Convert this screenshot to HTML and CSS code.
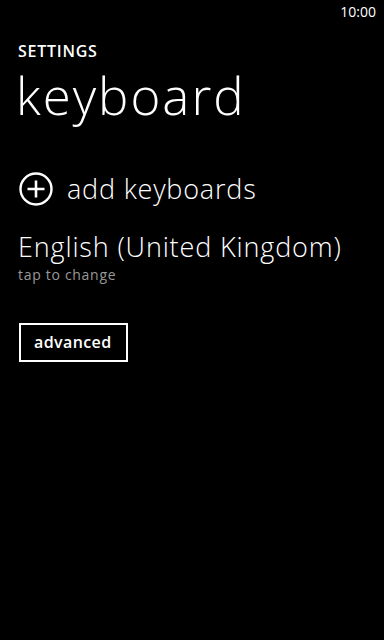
FILE: index.html
```html
<!DOCTYPE html>
<html>
<head>
<meta charset="utf-8">
<link rel="stylesheet" href="styles.css">
</head>
<body>
<div class="status"><span class="time">10:00</span></div>
<div class="page">
  <div class="app-title">SETTINGS</div>
  <div class="page-title">keyboard</div>
  <div class="add-row">
    <svg class="add-icon" width="34" height="34" viewBox="0 0 34 34">
      <circle cx="17" cy="17" r="15.5" fill="none" stroke="#fff" stroke-width="2.4"/>
      <path d="M17 8.5V25.5M8.5 17H25.5" stroke="#fff" stroke-width="2.6"/>
    </svg>
    <span class="add-text">add keyboards</span>
  </div>
  <div class="lang">English (United Kingdom)</div>
  <div class="hint">tap to change</div>
  <div class="btn">advanced</div>
</div>
</body>
</html>
```
FILE: styles.css
```css
html, body {
  margin: 0;
  padding: 0;
  background: #000;
  color: #fff;
  font-family: "Open Sans", "Noto Sans", sans-serif;
}
body {
  width: 384px;
  height: 640px;
  overflow: hidden;
}
.status {
  height: 24px;
  display: flex;
  justify-content: flex-end;
  padding-right: 8px;
}
.time {
  font-size: 14px;
  line-height: 24px;
}
.page {
  padding-left: 18px;
  padding-top: 16px;
}
.app-title {
  font-size: 16px;
  font-weight: 600;
  line-height: 20px;
  letter-spacing: 0.75px;
  margin-top: 1px;
}
.page-title {
  font-size: 51px;
  font-weight: 300;
  line-height: 56px;
  margin-top: 6px;
  margin-left: -2px;
  letter-spacing: 2px;
}
.add-row {
  display: flex;
  align-items: center;
  margin-top: 49px;
  height: 34px;
}
.add-icon {
  display: block;
  margin-left: 1px;
}
.add-text {
  font-size: 27px;
  font-weight: 300;
  line-height: 34px;
  margin-left: 14px;
  letter-spacing: 0.8px;
}
.lang {
  font-size: 27px;
  font-weight: 300;
  line-height: 32px;
  margin-top: 25px;
  letter-spacing: 0.85px;
}
.hint {
  font-size: 14px;
  line-height: 18px;
  color: #999;
  margin-top: 3px;
  letter-spacing: 0.7px;
}
.btn {
  display: inline-block;
  box-sizing: border-box;
  height: 39px;
  border: 2px solid #fff;
  padding: 0 14px 0 13px;
  font-size: 16px;
  font-weight: 600;
  line-height: 35px;
  margin-top: 39px;
  margin-left: 1px;
  letter-spacing: 0.4px;
}
```
